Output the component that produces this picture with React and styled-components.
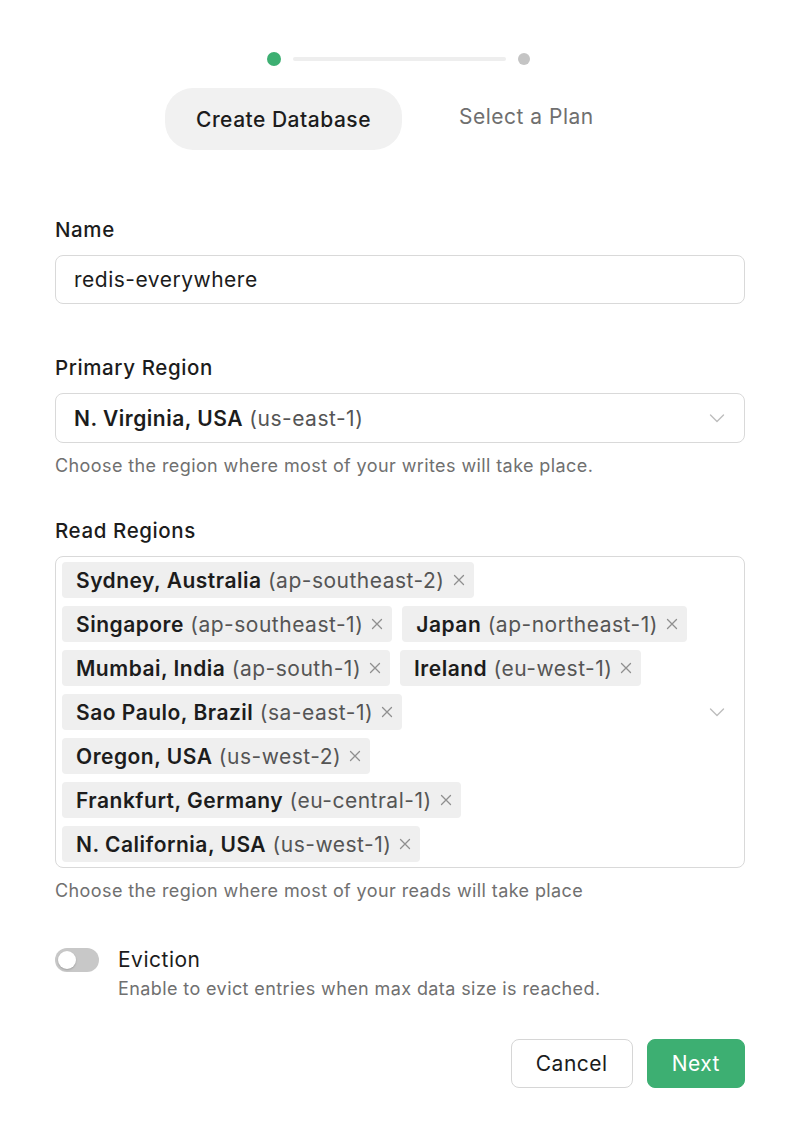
import React from "react";
import styled, { createGlobalStyle } from "styled-components";

const Global = createGlobalStyle`
  html, body { margin: 0; padding: 0; background: #ffffff; }
  body { font-family: Inter, "Noto Sans", sans-serif; color: #1c1c1c; }
  * { box-sizing: border-box; }
`;

const Page = styled.div`
  width: 800px;
  padding: 52px 55px 40px;
  display: flex;
  flex-direction: column;
`;

const Stepper = styled.div`
  display: flex;
  flex-direction: column;
  align-items: center;
`;

const Track = styled.div`
  display: flex;
  align-items: center;
  gap: 12px;
  margin-left: -4px;
`;

const Dot = styled.span`
  width: ${p => (p.$active ? 14 : 12)}px;
  height: ${p => (p.$active ? 14 : 12)}px;
  border-radius: 50%;
  background: ${p => (p.$active ? "#3daf72" : "#c4c4c4")};
`;

const Line = styled.span`
  width: 213px;
  height: 4px;
  border-radius: 2px;
  background: #eeeeee;
`;

const Tabs = styled.div`
  align-self: flex-start;
  display: flex;
  align-items: center;
  gap: 57px;
  margin-top: 22px;
  margin-left: 110px;
`;

const Tab = styled.div`
  height: 62px;
  padding: 0 ${p => (p.$active ? 31 : 0)}px;
  display: flex;
  align-items: center;
  border-radius: 28px;
  font-size: 21px;
  letter-spacing: 0.5px;
  font-weight: ${p => (p.$active ? 500 : 400)};
  color: ${p => (p.$active ? "#1c1c1c" : "#6f6f6f")};
  background: ${p => (p.$active ? "#f1f1f1" : "transparent")};
  margin-top: ${p => (p.$active ? 0 : -6)}px;
`;

const Field = styled.div`
  display: flex;
  flex-direction: column;
  margin-top: ${p => p.$top}px;
`;

const Label = styled.div`
  font-size: 20.5px;
  letter-spacing: 0.6px;
  font-weight: 500;
  line-height: 24px;
  color: #1c1c1c;
  margin-bottom: 13px;
`;

const Box = styled.div`
  border: 1px solid #d9d9d9;
  border-radius: 8px;
  display: flex;
  align-items: center;
  background: #fff;
`;

const TextInput = styled(Box)`
  height: 49px;
  padding: 0 18px;
  font-size: 21px;
  letter-spacing: 0.5px;
  color: #1c1c1c;
`;

const SelectBox = styled(Box)`
  height: 50px;
  padding: 0 18px;
  justify-content: space-between;
  font-size: 21px;
  letter-spacing: 0.5px;
`;

const Strong = styled.span`
  font-weight: 600;
  color: #1c1c1c;
`;

const Code = styled.span`
  font-weight: 400;
  color: #555555;
`;

const Help = styled.div`
  font-size: 18px;
  letter-spacing: 0.4px;
  line-height: 22px;
  color: #707070;
  margin-top: 12px;
`;

const MultiBox = styled(Box)`
  padding: 5px 18px 5px 6px;
  gap: 12px;
`;

const TagList = styled.div`
  flex: 1;
  display: flex;
  flex-wrap: wrap;
  gap: 8px 10px;
`;

const Tag = styled.div`
  height: 36px;
  padding: 0 9px 0 14px;
  display: flex;
  align-items: center;
  border-radius: 4px;
  background: #efefef;
  font-size: 21px;
  letter-spacing: 0.5px;
  white-space: nowrap;
`;

const Remove = styled.svg`
  width: 12px;
  height: 12px;
  margin-left: 8px;
  flex-shrink: 0;
`;

const RemoveIcon = () => (
  <Remove viewBox="0 0 12 12" fill="none">
    <path d="M1.5 1.5l9 9M10.5 1.5l-9 9" stroke="#8f8f8f" strokeWidth="1.3" strokeLinecap="round" />
  </Remove>
);

const Chevron = () => (
  <svg width="18" height="18" viewBox="0 0 18 18" fill="none">
    <path d="M2.5 6l6.5 6.5L15.5 6" stroke="#bdbdbd" strokeWidth="1.4" strokeLinecap="round" strokeLinejoin="round" />
  </svg>
);

const SwitchRow = styled.div`
  display: flex;
  gap: 19px;
  margin-top: 46px;
`;

const Switch = styled.div`
  width: 44px;
  height: 24px;
  border-radius: 12px;
  background: #c8c8c8;
  padding: 3px;
  flex-shrink: 0;
`;

const Knob = styled.div`
  width: 18px;
  height: 18px;
  border-radius: 50%;
  background: #fff;
  box-shadow: 0 1px 2px rgba(0, 0, 0, 0.2);
`;

const SwitchText = styled.div`
  display: flex;
  flex-direction: column;
  gap: 6px;
`;

const SwitchTitle = styled.div`
  font-size: 21px;
  letter-spacing: 0.5px;
  line-height: 24px;
  color: #1c1c1c;
`;

const SwitchDesc = styled.div`
  font-size: 18px;
  letter-spacing: 0.4px;
  line-height: 22px;
  color: #707070;
`;

const Actions = styled.div`
  display: flex;
  justify-content: flex-end;
  gap: 14px;
  margin-top: 39px;
`;

const Button = styled.button`
  height: 49px;
  padding: 0 24px;
  border-radius: 8px;
  font-family: inherit;
  font-size: 21px;
  letter-spacing: 0.5px;
  border: 1px solid ${p => (p.$primary ? "#3daf72" : "#d6d6d6")};
  background: ${p => (p.$primary ? "#3daf72" : "#ffffff")};
  color: ${p => (p.$primary ? "#ffffff" : "#1c1c1c")};
`;

const regions = [
  ["Sydney, Australia", "ap-southeast-2"],
  ["Singapore", "ap-southeast-1"],
  ["Japan", "ap-northeast-1"],
  ["Mumbai, India", "ap-south-1"],
  ["Ireland", "eu-west-1"],
  ["Sao Paulo, Brazil", "sa-east-1"],
  ["Oregon, USA", "us-west-2"],
  ["Frankfurt, Germany", "eu-central-1"],
  ["N. California, USA", "us-west-1"],
];

export default function App() {
  return (
    <Page>
      <Global />
      <Stepper>
        <Track>
          <Dot $active />
          <Line />
          <Dot />
        </Track>
        <Tabs>
          <Tab $active>Create Database</Tab>
          <Tab>Select a Plan</Tab>
        </Tabs>
      </Stepper>

      <Field $top={68}>
        <Label>Name</Label>
        <TextInput>redis-everywhere</TextInput>
      </Field>

      <Field $top={52}>
        <Label>Primary Region</Label>
        <SelectBox>
          <span>
            <Strong>N. Virginia, USA</Strong> <Code>(us-east-1)</Code>
          </span>
          <Chevron />
        </SelectBox>
        <Help>Choose the region where most of your writes will take place.</Help>
      </Field>

      <Field $top={42}>
        <Label>Read Regions</Label>
        <MultiBox>
          <TagList>
            {regions.map(([name, code]) => (
              <Tag key={code}>
                <Strong>{name}</Strong>&nbsp;<Code>({code})</Code>
                <RemoveIcon />
              </Tag>
            ))}
          </TagList>
          <Chevron />
        </MultiBox>
        <Help>Choose the region where most of your reads will take place</Help>
      </Field>

      <SwitchRow>
        <Switch>
          <Knob />
        </Switch>
        <SwitchText>
          <SwitchTitle>Eviction</SwitchTitle>
          <SwitchDesc>Enable to evict entries when max data size is reached.</SwitchDesc>
        </SwitchText>
      </SwitchRow>

      <Actions>
        <Button>Cancel</Button>
        <Button $primary>Next</Button>
      </Actions>
    </Page>
  );
}
